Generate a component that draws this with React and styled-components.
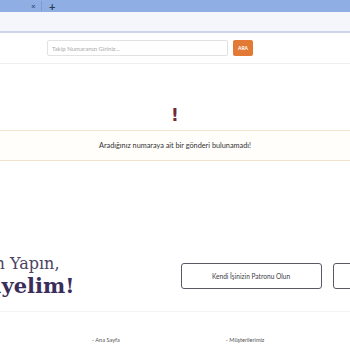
import React from 'react'
import styled, { createGlobalStyle } from 'styled-components'

const GlobalStyle = createGlobalStyle`
    html, body {
        margin: 0;
        padding: 0;
        overflow: hidden;
        background: #fff;
        font-family: Lato, "Open Sans", sans-serif;
    }
`

const TabStrip = styled.div`
    display: flex;
    align-items: center;
    height: 12px;
    background: #8eaee4;
    font-size: 9px;
    color: #2b3a55;
`

const TabClose = styled.span`
    margin-left: 31px;
    width: 8px;
    font-size: 8px;
    line-height: 1;
`

const TabDivider = styled.span`
    width: 1px;
    height: 10px;
    margin: 0 7px 0 2px;
    background: #7f9bd0;
`

const TabAdd = styled.span`
    font-size: 11px;
    font-weight: 700;
    line-height: 1;
`

const AddressBar = styled.div`
    height: 19px;
    background: #f4f6fb;
    border-bottom: 2px solid #cdd5e6;
`

const Header = styled.header`
    display: flex;
    align-items: center;
    gap: 5px;
    height: 30px;
    padding-left: 47px;
    border-bottom: 1px solid #efefef;
`

const SearchInput = styled.input`
    box-sizing: border-box;
    width: 181px;
    height: 16px;
    padding: 0 4px;
    border: 1px solid #e2e2e2;
    border-radius: 2px;
    font-family: Lato, sans-serif;
    font-size: 6px;
    outline: none;

    &::placeholder {
        color: #a9a9a9;
    }
`

const SearchButton = styled.button`
    width: 20px;
    height: 16px;
    padding: 0;
    border: none;
    border-radius: 2px;
    background: #e27a35;
    color: #fff;
    font-family: Lato, sans-serif;
    font-size: 5px;
    font-weight: 700;
`

const Result = styled.section`
    display: flex;
    flex-direction: column;
    align-items: center;
    padding-top: 42px;
`

const Mark = styled.div`
    height: 24px;
    color: #6e2b3a;
    font-family: "DejaVu Sans", sans-serif;
    font-size: 17px;
    font-weight: 700;
    line-height: 18px;
`

const Alert = styled.div`
    box-sizing: border-box;
    width: 100%;
    height: 31px;
    display: flex;
    align-items: center;
    justify-content: center;
    background: #fffefb;
    border-top: 1px solid #eee4cc;
    border-bottom: 1px solid #eee4cc;
    color: #333;
    font-size: 7.3px;
`

const Promo = styled.section`
    display: flex;
    justify-content: center;
    align-items: center;
    gap: 11px;
    margin-top: 93px;
    padding: 0 94px 13px 0;
    border-bottom: 1px solid #f3f3f3;
`

const Pitch = styled.div`
    flex: none;
    width: 292px;
    margin-right: 95px;
    text-align: right;
    font-family: "DejaVu Serif", serif;
    white-space: nowrap;
`

const PitchLine = styled.div`
    color: ${p => (p.$strong ? '#3a2d5a' : '#4b4263')};
    font-size: ${p => (p.$strong ? '21px' : '16px')};
    font-weight: ${p => (p.$strong ? 700 : 400)};
    line-height: ${p => (p.$strong ? '24px' : '20px')};
    padding-right: ${p => (p.$strong ? '0' : '15px')};
`

const Outline = styled.button`
    flex: none;
    box-sizing: border-box;
    width: 141px;
    height: 26px;
    border: 1px solid #5b5966;
    border-radius: 3px;
    background: #fff;
    color: #3c3c46;
    font-family: Lato, sans-serif;
    font-size: 6.6px;
`

const Footer = styled.footer`
    display: flex;
    padding: 24px 0 0 92px;
    gap: 106px;
    font-size: 5.6px;
    color: #555;
`

export default function App() {
    return (
        <>
            <GlobalStyle />
            <TabStrip>
                <TabClose>×</TabClose>
                <TabDivider />
                <TabAdd>+</TabAdd>
            </TabStrip>
            <AddressBar />
            <Header>
                <SearchInput placeholder="Takip Numaranızı Giriniz..." />
                <SearchButton>ARA</SearchButton>
            </Header>
            <Result>
                <Mark>!</Mark>
                <Alert>Aradığınız numaraya ait bir gönderi bulunamadı!</Alert>
            </Result>
            <Promo>
                <Pitch>
                    <PitchLine>Hemen Başvurum Yapın,</PitchLine>
                    <PitchLine $strong>Birlikte Büyüyelim!</PitchLine>
                </Pitch>
                <Outline>Kendi İşinizin Patronu Olun</Outline>
                <Outline>Bayimiz Olun</Outline>
            </Promo>
            <Footer>
                <span>- Ana Sayfa</span>
                <span>- Müşterilerimiz</span>
            </Footer>
        </>
    )
}
